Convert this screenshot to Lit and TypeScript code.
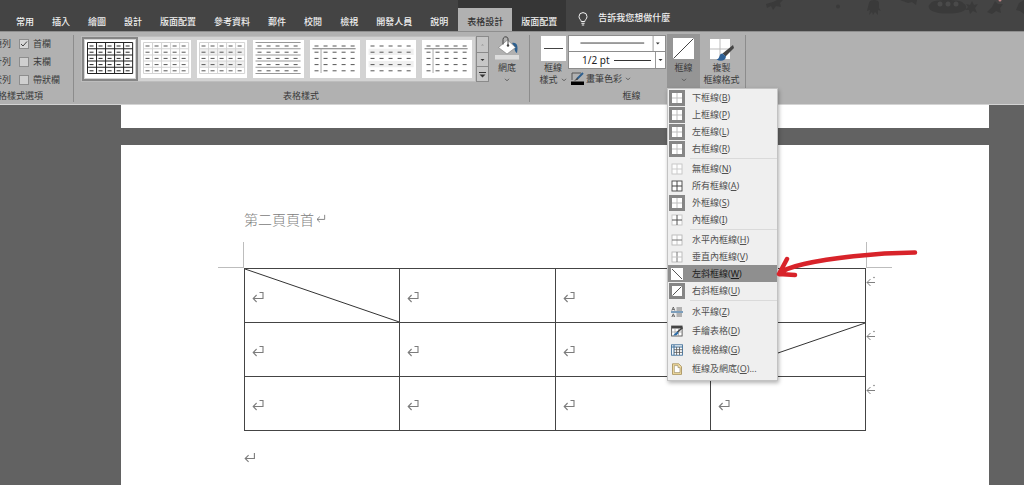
import { LitElement, html, svg, css, nothing, TemplateResult } from "lit";
import { customElement, property } from "lit/decorators.js";

const UI_FONT = css`"Noto Sans CJK TC", "Noto Sans", sans-serif`;

const mark = (cls = "mark") => html`<svg class=${cls} viewBox="0 0 12 12" aria-hidden="true">
  <path d="M7.500 1.500h3.500v6H1.200M4.600 4 1.200 7.500l3.400 3.500" fill="none" stroke="#7c7c7c" stroke-width="1.100"/></svg>`;

const plainMark = (cls = "mark") => html`<svg class=${cls} viewBox="0 0 12 12" aria-hidden="true">
  <path d="M10.400 1v5.500H1.200M4.600 3.200 1.200 6.500l3.400 3.300" fill="none" stroke="#7c7c7c" stroke-width="1.100"/></svg>`;

const rowEndMark = html`<svg class="row-end" viewBox="0 0 10 12" aria-hidden="true">
  <path d="M9 6.500H1M4.500 3 1 6.500 4.500 10" fill="none" stroke="#808080"/><circle cx="8" cy="1.500" r="0.800" fill="#808080"/></svg>`;

const chevron = html`<svg class="chevron" viewBox="0 0 6 4" aria-hidden="true">
  <path d="M1 .8 3 2.800 5 .8" fill="none" stroke="#555" stroke-width=".9"/></svg>`;

@customElement("style-thumb")
class StyleThumb extends LitElement {
  @property() kind = "plain";
  static styles = css`
    :host { display: block; background: #fff; height: 38px; }
    svg { display: block; width: 100%; height: 100%; }
  `;
  render() {
    const k = this.kind;
    const rows = [6, 12.2, 18.4, 24.600, 30.800];
    const cols = [6.500, 15.500, 24.500, 33.500, 42.500];
    const full = k === "grid" || k === "light" || k === "banded";
    const c = k === "grid" ? "#222" : "#d4d4d4";
    const line = (x1: number, y1: number, x2: number, y2: number, s: string) =>
      svg`<line x1=${x1} y1=${y1} x2=${x2} y2=${y2} stroke=${s} stroke-width="1"/>`;
    const ys = [2.500, 8.700, 14.900, 21.100, 27.300, 33.500];
    return html`<svg viewBox="0 0 50 38" preserveAspectRatio="none" aria-hidden="true">
      ${k === "banded" || k === "plain" ? svg`<path d="M2.500 8.700h45v6.200h-45zM2.500 21.100h45v6.200h-45z" fill="#f0f0f0"/>` : nothing}
      ${full ? [2.500, 11.500, 20.500, 29.500, 38.500, 47.500].map((x) => line(x, 2.500, x, 33.500, c)) : nothing}
      ${full ? ys.map((y) => line(2.500, y, 47.500, y, c)) : nothing}
      ${k === "rows" ? ys.map((y) => line(2.500, y, 47.500, y, "#999")) : nothing}
      ${k === "header" ? svg`${line(2.500, 8.700, 45.500, 8.700, "#777")}${line(11, 8.700, 11, 33, "#aaa")}` : nothing}
      ${rows.map((y) => cols.map((x) => line(x - 2, y, x + 2, y, k === "grid" ? "#222" : "#555")))}
    </svg>`;
  }
}

type Glyph =
  | "all" | "inside" | "none" | "insideH" | "insideV" | "outside"
  | "diagDown" | "diagUp" | "hline" | "draw" | "view" | "dialog";

@customElement("border-glyph")
class BorderGlyph extends LitElement {
  @property() kind: Glyph = "none";
  static styles = css`
    :host { display: block; width: 12px; height: 12px; }
    svg { display: block; width: 12px; height: 12px; }
  `;
  body(): TemplateResult {
    const cross = (o: string, v: string, h: string) => svg`
      <path d="M1 1h10v10H1z" fill="#fdfdfd"/>
      <rect x="1" y="1" width="10" height="10" fill="none" stroke=${o} stroke-width=".9"/>
      <path d="M6 1v10" stroke=${v}/><path d="M1 6h10" stroke=${h}/>`;
    switch (this.kind) {
      case "all": return cross("#444", "#444", "#444");
      case "inside": return cross("#c4c4c4", "#555", "#555");
      case "insideH": return cross("#b8b8b8", "#c4c4c4", "#777");
      case "insideV": return cross("#b8b8b8", "#777", "#c4c4c4");
      case "outside": return svg`<path d="M1 1h10v10H1z" fill="#fff"/><path d="M6 1v10M1 6h10" stroke="#bdbdbd"/>`;
      case "diagDown": return svg`<path d="M0 0h12v12H0z" fill="#fff"/><path d="M1 1l10 10" stroke="#555"/>`;
      case "diagUp": return svg`<path d="M1 1h10v10H1z" fill="#fff"/><path d="M10.500 1.500l-9 9" stroke="#555"/>`;
      case "hline": return svg`
        <path d="M.8 4.600 2.300 1l1.500 3.600M1.300 3.500h2M5.500 2h5.500M5.500 4h5.500M5.500 8h5.500M5.500 10h5.500" fill="none" stroke="#555" stroke-width=".8"/>
        <path d="M0 6h12" stroke="#2f6798" stroke-width="1.200"/><path d="M.8 11 2.300 7.800l1.500 3.200M1.300 10h2" fill="none" stroke="#555" stroke-width=".8"/>`;
      case "draw": return svg`
        <rect x=".6" y="1" width="10.500" height="10" fill="#fff" stroke="#555" stroke-width=".9"/>
        <path d="M.6 1h10.500v2.500H.6z" fill="#444"/><path d="M.6 7h10.500M4 3v8M7.500 3v8" stroke="#999" stroke-width=".7"/>
        <path d="M11.500 2.500 6 7.500" stroke="#444" stroke-width="1.600"/><path d="M6.500 6.500 4 8.500l-2 2 3.500-.3 2-2z" fill="#2b6ca8"/>`;
      case "view": return svg`
        <rect x=".6" y=".8" width="10.800" height="10.400" fill="#fff" stroke="#3b6c97" stroke-width=".9"/>
        <path d="M.6 3h10.800M3 1v10.200" stroke="#3b6c97"/><path d="M5.600 3v8M8.500 3v8M3 5.700h8.400M3 8.400h8.400" stroke="#555" stroke-width=".8"/>`;
      case "dialog": return svg`
        <path d="M1.500.8h6.200l2.800 2.800v7.800h-9z" fill="#f5dfa2" stroke="#a08a55" stroke-width=".8"/>
        <path d="M3.300 2.600h3.700v2h2v5H3.300z" fill="#fff" stroke="#8b7d5b" stroke-width=".6"/>`;
      default: return cross("#c4c4c4", "#cbcbcb", "#cbcbcb");
    }
  }
  render() {
    return html`<svg viewBox="0 0 12 12" aria-hidden="true">${this.body()}</svg>`;
  }
}

interface Item { text: string; key: string; glyph: Glyph; framed?: boolean; active?: boolean; tail?: string }
const MENU: Item[][] = [
  [
    { text: "下框線", key: "B", glyph: "outside", framed: true },
    { text: "上框線", key: "P", glyph: "outside", framed: true },
    { text: "左框線", key: "L", glyph: "outside", framed: true },
    { text: "右框線", key: "R", glyph: "outside", framed: true },
  ],
  [
    { text: "無框線", key: "N", glyph: "none" },
    { text: "所有框線", key: "A", glyph: "all" },
    { text: "外框線", key: "S", glyph: "outside", framed: true },
    { text: "內框線", key: "I", glyph: "inside" },
  ],
  [
    { text: "水平內框線", key: "H", glyph: "insideH" },
    { text: "垂直內框線", key: "V", glyph: "insideV" },
    { text: "左斜框線", key: "W", glyph: "diagDown", active: true },
    { text: "右斜框線", key: "U", glyph: "diagUp", framed: true },
  ],
  [
    { text: "水平線", key: "Z", glyph: "hline" },
    { text: "手繪表格", key: "D", glyph: "draw" },
    { text: "檢視格線", key: "G", glyph: "view" },
    { text: "框線及網底", key: "O", glyph: "dialog", tail: "..." },
  ],
];

@customElement("border-menu")
class BorderMenu extends LitElement {
  static styles = css`
    :host { display: block; width: 111px; box-sizing: border-box; padding: 0 0 2px; background: #efefef;
      border: 1px solid #c3c3c3; box-shadow: 1px 2px 4px rgba(0, 0, 0, .3); font-family: "Noto Sans", ${UI_FONT}; }
    .group + .group { position: relative; margin-top: 3px; }
    .group + .group::before { content: ""; position: absolute; top: -2px; left: 22px; right: 0; height: 1px; background: #dadada; }
    button { all: unset; box-sizing: border-box; position: relative; display: flex; align-items: center; gap: 7px;
      width: 100%; height: 17px; padding-left: 1px; font-size: 9px; line-height: 17px; color: #505050; white-space: nowrap; }
    .last button { height: 19px; line-height: 19px; }
    .icon { padding: 2px; }
    .framed { background: #868686; }
    .active { background: #8f8f8f; color: #1c1c1c; }
    .arrow { position: absolute; left: 107px; top: -17px; width: 144px; height: 34px; }
  `;
  render() {
    return html`${MENU.map((g, i) => html`<div class="group ${i === 3 ? "last" : ""}" role="group">
      ${g.map((m) => html`<button role="menuitem" class=${m.active ? "active" : ""}>
        <span class="icon ${m.framed ? "framed" : ""}"><border-glyph .kind=${m.glyph}></border-glyph></span>
        <span>${m.text}(<u>${m.key}</u>)${m.tail ?? ""}</span>
        ${m.active ? html`<svg class="arrow" viewBox="0 0 144 34" aria-hidden="true">
          <path d="M140 4.500C98 5 55 10 29 16 18 18.500 9 21 4 26M12 11 4 26l16 1" fill="none" stroke="#d8232a" stroke-width="4.500" stroke-linecap="round" stroke-linejoin="round"/></svg>` : nothing}
      </button>`)}
    </div>`)}`;
  }
}

@customElement("app-root")
class AppRoot extends LitElement {
  static styles = css`
    :host { display: flex; flex-direction: column; min-height: 100vh; background: #626262; color: #3a3a3a;
      font-family: ${UI_FONT}; font-size: 9px; line-height: 12px; overflow: hidden; }
    * { box-sizing: border-box; }
    button { all: unset; box-sizing: border-box; white-space: nowrap; }
    svg { display: block; flex: none; }

    .tabs { position: relative; display: flex; align-items: stretch; height: 31px; padding: 8px 0 0 7px; background: #444; color: #f0f0f0; font-weight: 500; }
    .tabs button { padding: 4px 9px 0; }
    .context { display: flex; margin: -8px 0 0 1px; padding-top: 8px; background: #363636; }
    .tabs .current { background: #b1b1b1; color: #333; }
    .tabs .tell { display: flex; gap: 10px; padding-left: 12px; }
    .bulb { width: 10px; height: 14px; }
    .doodles { position: absolute; top: 0; right: 0; width: 274px; height: 20px; }

    .ribbon { position: relative; z-index: 1; display: flex; height: 74px; padding: 3px 0 2px; background: #b1b1b1; border-top: 1px solid #8f8f8f; border-bottom: 1px solid #d4d4d4; }
    .set { display: flex; flex-direction: column; justify-content: space-between; border-right: 1px solid #8c8c8c; }
    .set h2 { margin: 0; font: inherit; text-align: center; white-space: nowrap; }
    .tools { display: flex; }
    .chevron { width: 6px; height: 4px; }

    .options { width: 74px; overflow: hidden; }
    .options h2 { display: flex; justify-content: flex-end; padding-right: 30px; }
    .checks { display: grid; grid-template-columns: 11px 1fr; column-gap: 8px; row-gap: 6px; padding-top: 3px; }
    .cut { display: flex; justify-content: flex-end; white-space: nowrap; }
    .check { display: flex; align-items: center; gap: 4px; white-space: nowrap; }
    .check input { appearance: none; flex: none; width: 10px; height: 10px; margin: 0; border: 1px solid #8d8d8d; background: #cfcfcf; }
    .check input:checked { background: #d6d6d6 url("data:image/svg+xml,%3Csvg xmlns='http://www.w3.org/2000/svg' viewBox='0 0 8 8'%3E%3Cpath d='M1 4l2 2 4-4.500' fill='none' stroke='%23444'/%3E%3C/svg%3E"); }

    .styles { width: 456px; padding-left: 7px; }
    .styles h2 { padding-right: 8px; }
    .gallery { display: grid; grid-template-columns: repeat(7, 1fr); width: 395px; height: 46px; margin-top: 1px; background: #d3d3d3; border: 1px solid #bdbdbd; }
    .gallery button { padding: 3px; }
    .gallery .picked { padding: 1px; border: 2px solid #858585; }
    .scroller { display: grid; grid-template-rows: repeat(3, 1fr); width: 13px; height: 46px; margin-top: 1px; background: #c6c6c6; border: 1px solid #8a8a8a; }
    .scroller button { display: grid; place-items: center; }
    .scroller button + button { border-top: 1px solid #8a8a8a; }
    .scroller svg { width: 7px; height: 7px; }
    .tall { display: flex; flex-direction: column; align-items: center; }
    .shade { width: 36px; gap: 2px; padding-top: 1px; }
    .shade .bucket { width: 26px; height: 24px; }
    .shade .chevron { margin-top: 2px; }

    .borders { width: 216px; padding-left: 8px; }
    .borders h2 { padding-right: 20px; }
    .kind { width: 30px; }
    .kind .tile { width: 26px; height: 26px; margin-bottom: 1px; }
    .inline { display: flex; align-items: center; gap: 3px; }
    .pens { width: 98px; }
    .pick { display: grid; height: 17px; background: #fff; border: 1px solid #8c8c8c; }
    .pick + .pick { border-top: 0; }
    .pick > * { grid-area: 1 / 1; }
    .pick select { appearance: none; width: 100%; height: 100%; margin: 0; padding: 0 0 0 13px; border: 0; border-radius: 0; background: none; color: #222; font: 10px "Noto Sans", sans-serif; }
    .pick svg { width: 100%; height: 100%; pointer-events: none; }
    .pen { display: flex; align-items: center; gap: 2px; padding: 3px 0 0 3px; }
    .pen .nib { width: 13px; height: 13px; }
    .anchor { position: relative; width: 33px; height: 54px; margin: -1px 0 0 1px; background: #959595; }
    .anchor .tall { width: 100%; padding-top: 4px; }
    .anchor .tile { width: 21px; height: 21px; margin-bottom: 3px; }
    .anchor .chevron { margin-top: 4px; }
    border-menu { position: absolute; top: 100%; left: 0; }
    .copy { width: 43px; padding-top: 3px; }
    .copy .brush { width: 25px; height: 24px; }

    .desk { flex: 1; display: flex; flex-direction: column; gap: 17px; padding: 0 35px 0 121px; }
    .page { background: #fff; }
    .previous { height: 23px; }
    .sheet { flex: 1; padding: 60px 123px 22px; }
    .header { display: flex; align-items: center; gap: 2px; margin: 0 0 35px; font-size: 14px; line-height: 28px; font-weight: 300; color: #808080; }
    .header .mark { width: 10px; height: 10px; }
    .frame { position: relative; }
    table { width: 100%; border-collapse: collapse; table-layout: fixed; }
    td { position: relative; height: 54px; padding: 2px 0 0 7px; border: 1px solid #444; }
    .mark { width: 12px; height: 12px; }
    .slash { position: absolute; inset: 0; width: 100%; height: 100%; }
    .row-end { position: absolute; left: 100%; top: 7px; width: 10px; height: 12px; margin-left: 1px; }
    .corner { position: absolute; bottom: 100%; width: 26px; height: 26px; border-bottom: 1px solid #bdbdbd; }
    .nw { right: 100%; border-right: 1px solid #bdbdbd; }
    .ne { left: 100%; border-left: 1px solid #bdbdbd; }
    .after { margin: 21px 0 0; }
  `;

  tab(t: string) { return html`<button role="tab">${t}</button>`; }

  check(cut: string, label: string, on = false) {
    return html`<span class="cut">${cut}</span>
      <label class="check"><input type="checkbox" .checked=${on} />${label}</label>`;
  }

  cell(r: number, c: number) {
    const d = r === 0 && c === 0 ? [0, 0, 100, 100] : r === 1 && c === 3 ? [0, 100, 100, 0] : null;
    return html`<td>
      ${d ? html`<svg class="slash" viewBox="0 0 100 100" preserveAspectRatio="none" aria-hidden="true">
        <line x1=${d[0]} y1=${d[1]} x2=${d[2]} y2=${d[3]} stroke="#333" vector-effect="non-scaling-stroke"/></svg>` : nothing}
      ${mark()}${c === 3 ? rowEndMark : nothing}</td>`;
  }

  render() {
    const thumbs = ["grid", "light", "banded", "rows", "header", "plain", "header"];
    return html`
      <nav class="tabs" role="tablist">
        ${["常用", "插入", "繪圖", "設計", "版面配置", "參考資料", "郵件", "校閱", "檢視", "開發人員", "說明"].map((t) => this.tab(t))}
        <div class="context"><button role="tab" class="current" aria-selected="true">表格設計</button>${this.tab("版面配置")}</div>
        <button class="tell"><svg class="bulb" viewBox="0 0 10 14" aria-hidden="true">
          <path d="M3.200 9.500C3.200 7.800 1 7 1 4.600a4 4 0 0 1 8 0C9 7 6.800 7.800 6.800 9.500zM3.400 11.300h3.200M3.800 13h2.400" fill="none" stroke="#f2f2f2"/></svg>告訴我您想做什麼</button>
        <svg class="doodles" viewBox="0 0 274 20" aria-hidden="true"><g fill="#3a3a3a">
          <path d="M16 4l7-2 4-2h6l-3 3 1 4-5-1-3 4-2-4-4 2z"/><circle cx="88" cy="6.500" r="2"/>
          <path d="M119 3c0-4 10-4 10 0v5l2 3-3-1v5l-3-3-2 3-1-3-3 3 1-5-3 1z"/>
          <path d="M150 0h17l-1 5-4-3-4 1z"/><path d="M181 3c0-4 32-4 32 0 5 3 4 7-2 9-8 2-20 2-26 0-7-2-8-6-4-9z"/>
          <path d="M216 4l4 1 2-4 2 4 4-1-3 4 2 5-4-2-3 3-1-4-4 0 3-3z"/><path d="M237 12l5-5 3-6 3 3 5 0-3 4 1 5-5-2-4 3z"/><path d="M266 10l3-7 5-3v14l-4-3z"/></g>
          <g fill="#4a4a4a"><circle cx="190" cy="4" r="2.500"/><circle cx="198" cy="4" r="2.500"/><circle cx="206" cy="4" r="2.500"/></g>
          <circle cx="250" cy="0" r="1.500" fill="#c48787"/></svg>
      </nav>

      <div class="ribbon">
        <section class="set options">
          <div class="checks">${this.check("標題列", "首欄", true)}${this.check("合計列", "末欄")}${this.check("帶狀列", "帶狀欄")}</div>
          <h2>表格樣式選項</h2>
        </section>

        <section class="set styles">
          <div class="tools">
            <div class="gallery">${thumbs.map((k, i) => html`<button class=${i === 0 ? "picked" : ""} aria-label="表格樣式 ${i + 1}"><style-thumb .kind=${k}></style-thumb></button>`)}</div>
            <div class="scroller">
              <button aria-label="上一列"><svg viewBox="0 0 7 7"><path d="M2 4.500 3.500 3 5 4.500z" fill="#999"/></svg></button>
              <button aria-label="下一列"><svg viewBox="0 0 7 7"><path d="M1.500 3h4l-2 2z" fill="#333"/></svg></button>
              <button aria-label="其他"><svg viewBox="0 0 7 7"><path d="M0 1.500h7" stroke="#333"/><path d="M.5 3.500h6L3.500 6.500z" fill="#333"/></svg></button>
            </div>
            <button class="tall shade"><svg class="bucket" viewBox="0 0 26 24" aria-hidden="true">
              <path d="M18 7c5-1 6.500 3 5 10-2.500-1-2.500-5-3-7z" fill="#2d5f8e"/>
              <path d="M4.500 11.500 13.500 4l8 7.500-8.500 6.500z" fill="#fff" stroke="#777" stroke-width=".6"/>
              <path d="M9 8.500V3.500C9 0 14 0 14 3v6" fill="none" stroke="#444"/><circle cx="14" cy="9.500" r="1.200" fill="#444"/>
              <path d="M1 19h24v4.500H1z" fill="#dcdcdc"/></svg>網底${chevron}</button>
          </div>
          <h2>表格樣式</h2>
        </section>

        <section class="set borders">
          <div class="tools">
            <button class="tall kind"><svg class="tile" viewBox="0 0 26 26" aria-hidden="true"><path d="M1 1h25v25H1z" fill="#fff"/><path d="M4 13.500h19" stroke="#444"/></svg>框線<span class="inline">樣式${chevron}</span></button>
            <div class="pens">
              <div class="pick"><select aria-label="畫筆樣式"><option aria-label="單線"></option></select>
                <svg viewBox="0 0 96 16" aria-hidden="true"><path d="M9 7.500h68" stroke="#333"/><path d="M86.500 0v16" stroke="#999"/><path d="M89.500 7h4l-2 2z" fill="#333"/></svg></div>
              <div class="pick"><select aria-label="畫筆粗細"><option>1/2 pt</option></select>
                <svg viewBox="0 0 96 16" aria-hidden="true"><path d="M45 8.500h37" stroke="#333"/><path d="M86.500 0v16" stroke="#999"/><path d="M89.500 7h4l-2 2z" fill="#333"/></svg></div>
              <button class="pen"><svg class="nib" viewBox="0 0 13 13" aria-hidden="true"><path d="M1 8V1h9" fill="none" stroke="#555"/><path d="M12 1 6 7" stroke="#2d5f8e" stroke-width="2"/><path d="M6.500 5.500 3 9l4-1.500z" fill="#444"/><path d="M0 9.500h13V13H0z" fill="#000"/></svg><span class="inline">畫筆色彩${chevron}</span></button>
            </div>
            <div class="anchor">
              <button class="tall" aria-haspopup="menu" aria-expanded="true"><svg class="tile" viewBox="0 0 21 21" aria-hidden="true"><path d="M0 0h21v21H0z" fill="#fff"/><path d="M20.500.5l-20 20" stroke="#444"/></svg>框線${chevron}</button>
              <border-menu role="menu"></border-menu>
            </div>
            <button class="tall copy"><svg class="brush" viewBox="0 0 25 24" aria-hidden="true"><path d="M1 1h20v20H1z" fill="#fff"/><path d="M11 1v20M1 11h20" stroke="#bbb"/>
              <path d="M24 7 13.500 15.500l3 3L25 10z" fill="#444"/><path d="M13.500 15.500c-4 0-2 5-6 6 4 2.500 9 1.500 9.500-3z" fill="#2d6096"/></svg><span>複製</span><span>框線格式</span></button>
          </div>
          <h2>框線</h2>
        </section>
      </div>

      <main class="desk">
        <div class="page previous"></div>
        <article class="page sheet">
          <p class="header">第二頁頁首${plainMark()}</p>
          <div class="frame">
            <span class="corner nw"></span><span class="corner ne"></span>
            <table><tbody>${[0, 1, 2].map((r) => html`<tr>${[0, 1, 2, 3].map((c) => this.cell(r, c))}</tr>`)}</tbody></table>
          </div>
          <p class="after">${plainMark()}</p>
        </article>
      </main>`;
  }
}
